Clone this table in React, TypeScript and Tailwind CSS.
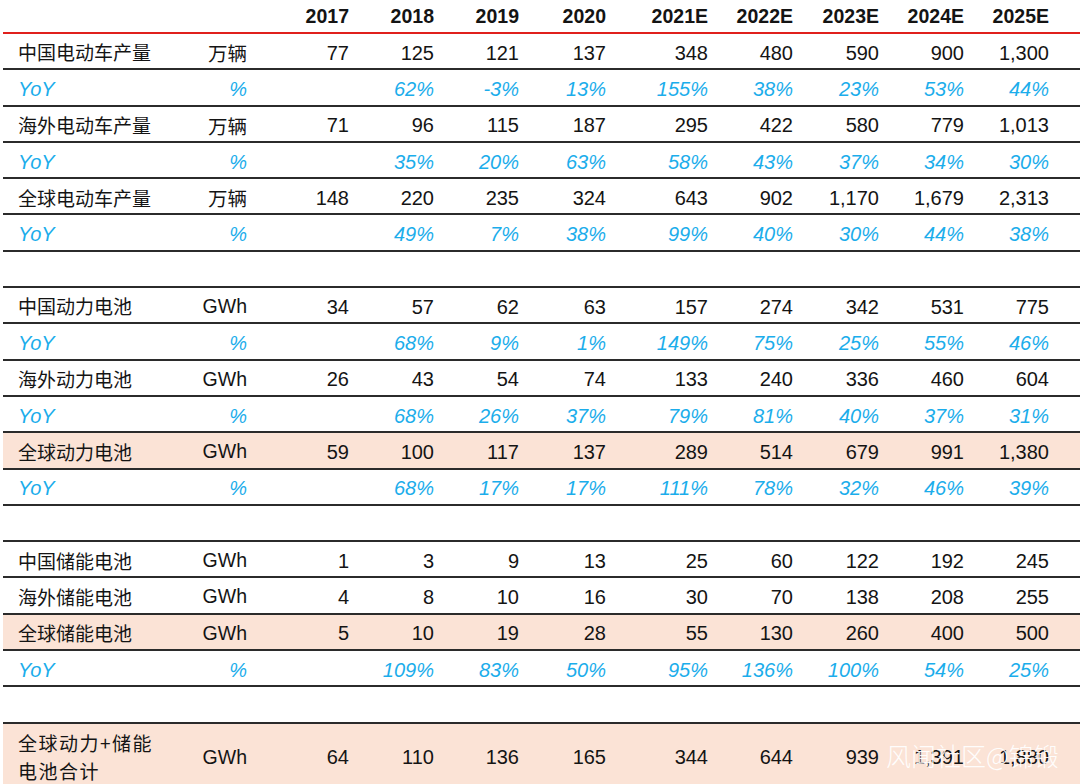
const YEARS = ['2017', '2018', '2019', '2020', '2021E', '2022E', '2023E', '2024E', '2025E'];

type Row =
  | { kind: 'data'; label: string; unit: string; values: string[]; hl?: boolean }
  | { kind: 'yoy'; values: string[] }
  | { kind: 'blank' };

const ROWS: Row[] = [
  { kind: 'data', label: '中国电动车产量', unit: '万辆', values: ['77', '125', '121', '137', '348', '480', '590', '900', '1,300'] },
  { kind: 'yoy', values: ['', '62%', '-3%', '13%', '155%', '38%', '23%', '53%', '44%'] },
  { kind: 'data', label: '海外电动车产量', unit: '万辆', values: ['71', '96', '115', '187', '295', '422', '580', '779', '1,013'] },
  { kind: 'yoy', values: ['', '35%', '20%', '63%', '58%', '43%', '37%', '34%', '30%'] },
  { kind: 'data', label: '全球电动车产量', unit: '万辆', values: ['148', '220', '235', '324', '643', '902', '1,170', '1,679', '2,313'] },
  { kind: 'yoy', values: ['', '49%', '7%', '38%', '99%', '40%', '30%', '44%', '38%'] },
  { kind: 'blank' },
  { kind: 'data', label: '中国动力电池', unit: 'GWh', values: ['34', '57', '62', '63', '157', '274', '342', '531', '775'] },
  { kind: 'yoy', values: ['', '68%', '9%', '1%', '149%', '75%', '25%', '55%', '46%'] },
  { kind: 'data', label: '海外动力电池', unit: 'GWh', values: ['26', '43', '54', '74', '133', '240', '336', '460', '604'] },
  { kind: 'yoy', values: ['', '68%', '26%', '37%', '79%', '81%', '40%', '37%', '31%'] },
  { kind: 'data', label: '全球动力电池', unit: 'GWh', hl: true, values: ['59', '100', '117', '137', '289', '514', '679', '991', '1,380'] },
  { kind: 'yoy', values: ['', '68%', '17%', '17%', '111%', '78%', '32%', '46%', '39%'] },
  { kind: 'blank' },
  { kind: 'data', label: '中国储能电池', unit: 'GWh', values: ['1', '3', '9', '13', '25', '60', '122', '192', '245'] },
  { kind: 'data', label: '海外储能电池', unit: 'GWh', values: ['4', '8', '10', '16', '30', '70', '138', '208', '255'] },
  { kind: 'data', label: '全球储能电池', unit: 'GWh', hl: true, values: ['5', '10', '19', '28', '55', '130', '260', '400', '500'] },
  { kind: 'yoy', values: ['', '109%', '83%', '50%', '95%', '136%', '100%', '54%', '25%'] },
  { kind: 'blank' },
];

const GRID =
  'grid grid-cols-[170px_88px_102px_85px_85px_87px_102px_85px_86px_85px_85px_1fr] items-center';
const CJK = "font-['Noto_Sans_CJK_SC','Noto_Sans',sans-serif]";
const NUM = "font-['Liberation_Sans',Arial,sans-serif]";

function TableRow({ row }: { row: Row }) {
  if (row.kind === 'blank') {
    return <div className="h-[36.3px] border-b-2 border-[#2b2b2b]" />;
  }
  if (row.kind === 'yoy') {
    return (
      <div className={`${GRID} h-[36.3px] pt-[3px] border-b-2 border-[#2b2b2b] ${NUM} italic text-[20px] text-[#1badeb]`}>
        <span className="pl-[15px]">YoY</span>
        <span className="pr-[14px] text-right">%</span>
        {row.values.map((v, i) => (
          <span key={i} className="pr-[14px] text-right">{v}</span>
        ))}
        <span />
      </div>
    );
  }
  return (
    <div
      className={`${GRID} h-[36.3px] pt-[3px] border-b-2 border-[#2b2b2b] text-[#141414] ${row.hl ? 'bg-[#fbe3d6]' : ''}`}
    >
      <span className={`pl-[15px] text-[19px] ${CJK}`}>{row.label}</span>
      <span className={`pr-[14px] text-right text-[19.5px] ${row.unit === 'GWh' ? NUM : CJK}`}>{row.unit}</span>
      {row.values.map((v, i) => (
        <span key={i} className={`pr-[14px] text-right text-[20px] ${NUM}`}>{v}</span>
      ))}
      <span />
    </div>
  );
}

export default function App() {
  return (
    <div className="relative w-[1080px] h-[784px] overflow-hidden bg-white">
      <div className="ml-[3px]">
        {/* Header */}
        <div className={`${GRID} h-[34px] pt-[2px] border-b-2 border-[#e0201c] ${NUM} font-bold text-[19.5px] text-[#141414]`}>
          <span />
          <span />
          {YEARS.map((y) => (
            <span key={y} className="pr-[14px] text-right">{y}</span>
          ))}
          <span />
        </div>

        {ROWS.map((row, i) => (
          <TableRow key={i} row={row} />
        ))}

        {/* Total row */}
        <div className={`${GRID} h-[62px] pt-[5px] bg-[#fbe3d6] text-[#141414]`}>
          <span className={`pl-[15px] text-[19px] leading-[28px] tracking-[1.5px] ${CJK}`}>
            全球动力+储能
            <br />
            电池合计
          </span>
          <span className={`pr-[14px] text-right text-[19.5px] ${NUM}`}>GWh</span>
          {['64', '110', '136', '165', '344', '644', '939', '1,391', '1,880'].map((v, i) => (
            <span key={i} className={`pr-[14px] text-right text-[20px] ${NUM}`}>{v}</span>
          ))}
          <span />
        </div>
      </div>

      {/* Watermark */}
      <div
        className={`absolute left-[886px] top-[737px] text-[25px] font-light text-white/95 whitespace-nowrap ${CJK}`}
      >
        风闻社区@锦锻
      </div>
    </div>
  );
}
